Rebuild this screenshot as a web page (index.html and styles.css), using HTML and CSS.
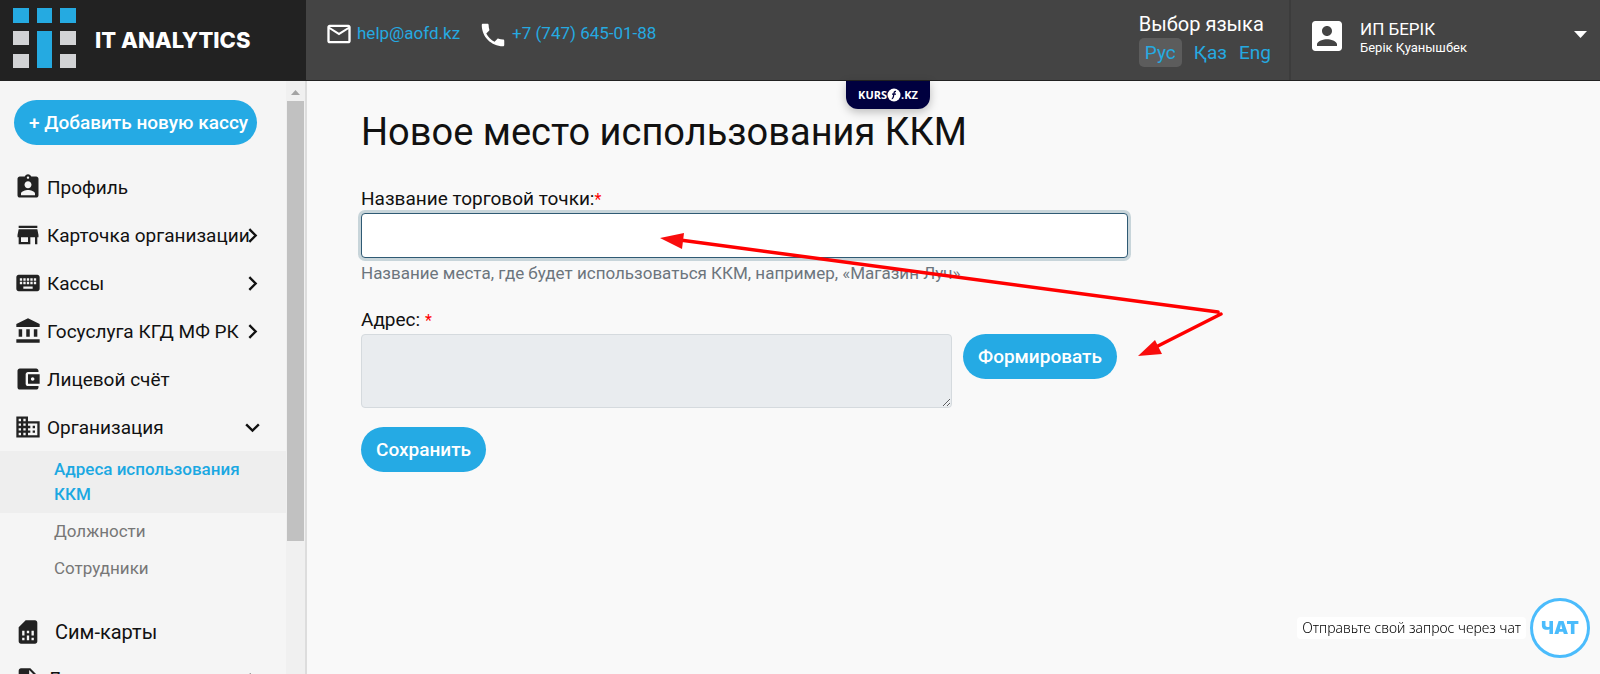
FILE: index.html
```html
<!DOCTYPE html>
<html lang="ru">
<head>
<meta charset="utf-8">
<title>Новое место использования ККМ</title>
<link rel="stylesheet" href="styles.css">
</head>
<body>
<header class="topbar">
  <a class="brand" href="#">
    <svg class="brand-logo" width="64" height="62" viewBox="0 0 64 62" aria-hidden="true">
      <g fill="#25aae1"><path d="M0 0h16v15H0zM24 0h15v15H24zM47 0h16v15H47zM24 23h15v37H24z"/></g>
      <g fill="#d2d3d5"><path d="M0 23h16v14H0zM47 23h16v14H47zM0 46h16v14H0zM47 46h16v14H47z"/></g>
    </svg>
    <span class="brand-name">IT ANALYTICS</span>
  </a>
  <div class="contacts">
    <a class="contact" href="#">
      <svg width="28" height="28" viewBox="0 0 24 24" fill="#fff"><path d="M22 6c0-1.100-.9-2-2-2H4c-1.100 0-2 .9-2 2v12c0 1.100.9 2 2 2h16c1.100 0 2-.9 2-2V6zm-2 0l-8 5-8-5h16zm0 12H4V8l8 5 8-5v10z"/></svg>
      <span>help@aofd.kz</span>
    </a>
    <a class="contact" href="#">
      <svg width="30" height="30" viewBox="0 0 24 24" fill="#fff"><path d="M20 15.500c-1.250 0-2.450-.2-3.570-.57-.35-.11-.74-.03-1.020.24l-2.200 2.200c-2.830-1.440-5.150-3.750-6.590-6.590l2.200-2.210c.28-.26.360-.65.250-1C8.700 6.450 8.500 5.250 8.500 4c0-.55-.45-1-1-1H4c-.55 0-1 .45-1 1 0 9.390 7.610 17 17 17 .55 0 1-.45 1-1v-3.500c0-.55-.45-1-1-1z"/></svg>
      <span>+7 (747) 645-01-88</span>
    </a>
  </div>
  <div class="language">
    <span class="language-title">Выбор языка</span>
    <nav class="language-list">
      <a class="lang lang-active" href="#">Рус</a><a class="lang" href="#">Қаз</a><a class="lang" href="#">Eng</a>
    </nav>
  </div>
  <button class="user" type="button">
    <svg width="40" height="40" viewBox="0 0 24 24" fill="#fff"><path d="M3 5v14c0 1.100.89 2 2 2h14c1.100 0 2-.9 2-2V5c0-1.100-.9-2-2-2H5c-1.110 0-2 .9-2 2zm12 4c0 1.660-1.340 3-3 3s-3-1.340-3-3 1.340-3 3-3 3 1.340 3 3zm-9 8c0-2 4-3.100 6-3.100s6 1.100 6 3.100v1H6v-1z"/></svg>
    <span class="user-text"><span class="user-name">ИП БЕРІК</span><span class="user-person">Берік Қуанышбек</span></span>
    <svg class="user-caret" width="14" height="8" viewBox="0 0 14 8" fill="#fff"><path d="M0 0h13L6.500 7z"/></svg>
  </button>
  <a class="kurs" href="#">KURS<svg width="14" height="14" viewBox="0 0 14 14"><circle cx="7" cy="7" r="6.500" fill="#fff"/><path d="M9 3.500C7 3.200 7 5 6.700 7S6 10.800 4.800 10.500M5 6.200h4" fill="none" stroke="#00003f" stroke-width="1.300"/></svg>.KZ</a>
</header>

<div class="layout">
  <aside class="sidebar">
    <div class="sidebar-content">
      <button class="btn add" type="button">+ Добавить новую кассу</button>
      <nav class="menu">
        <a class="item" href="#">
          <svg class="icon" viewBox="0 0 24 24"><path d="M19 3h-4.180C14.400 1.840 13.300 1 12 1c-1.300 0-2.400.84-2.820 2H5c-1.100 0-2 .9-2 2v14c0 1.100.9 2 2 2h14c1.100 0 2-.9 2-2V5c0-1.100-.9-2-2-2zm-7 0c.55 0 1 .45 1 1s-.45 1-1 1-1-.45-1-1 .45-1 1-1zm0 4c1.660 0 3 1.340 3 3s-1.340 3-3 3-3-1.340-3-3 1.340-3 3-3zm6 12H6v-1.400c0-2 4-3.100 6-3.100s6 1.100 6 3.100V19z"/></svg>
          <span>Профиль</span>
        </a>
        <a class="item" href="#">
          <svg class="icon" viewBox="0 0 24 24"><path d="M20 4H4v2h16V4zm1 10v-2l-1-5H4l-1 5v2h1v6h10v-6h4v6h2v-6h1zm-9 4H6v-4h6v4z"/></svg>
          <span>Карточка организации</span>
          <svg class="chevron" viewBox="0 0 24 24"><path d="M8 4l8 8-8 8"/></svg>
        </a>
        <a class="item" href="#">
          <svg class="icon" viewBox="0 0 24 24"><path d="M20 5H4c-1.100 0-1.990.9-1.990 2L2 17c0 1.100.9 2 2 2h16c1.100 0 2-.9 2-2V7c0-1.100-.9-2-2-2zm-9 3h2v2h-2V8zm0 3h2v2h-2v-2zM8 8h2v2H8V8zm0 3h2v2H8v-2zm-1 2H5v-2h2v2zm0-3H5V8h2v2zm9 7H8v-2h8v2zm0-4h-2v-2h2v2zm0-3h-2V8h2v2zm3 3h-2v-2h2v2zm0-3h-2V8h2v2z"/></svg>
          <span>Кассы</span>
          <svg class="chevron" viewBox="0 0 24 24"><path d="M8 4l8 8-8 8"/></svg>
        </a>
        <a class="item" href="#">
          <svg class="icon" viewBox="0 0 24 24"><path d="M4 10.500v6.500h3v-6.500H4zm6.500 0v6.500h3v-6.500h-3zM2 22h20v-3H2v3zm15-11.500v6.500h3v-6.500h-3zM12 1L2 6v2.500h20V6L12 1z"/></svg>
          <span>Госуслуга КГД МФ РК</span>
          <svg class="chevron" viewBox="0 0 24 24"><path d="M8 4l8 8-8 8"/></svg>
        </a>
        <a class="item" href="#">
          <svg class="icon" viewBox="0 0 24 24"><path d="M21 18v1c0 1.100-.9 2-2 2H5c-1.110 0-2-.9-2-2V5c0-1.100.89-2 2-2h14c1.100 0 2 .9 2 2v1h-9c-1.110 0-2 .9-2 2v8c0 1.100.89 2 2 2h9zm-9-2h10V8H12v8zm4-2.500c-.83 0-1.500-.67-1.500-1.500s.67-1.500 1.500-1.500 1.500.67 1.500 1.500-.67 1.500-1.500 1.500z"/></svg>
          <span>Лицевой счёт</span>
        </a>
        <a class="item" href="#">
          <svg class="icon" viewBox="0 0 24 24"><path d="M12 7V3H2v18h20V7H12zM6 19H4v-2h2v2zm0-4H4v-2h2v2zm0-4H4V9h2v2zm0-4H4V5h2v2zm4 12H8v-2h2v2zm0-4H8v-2h2v2zm0-4H8V9h2v2zm0-4H8V5h2v2zm10 12h-8v-2h2v-2h-2v-2h2v-2h-2V9h8v10zm-2-8h-2v2h2v-2zm0 4h-2v2h2v-2z"/></svg>
          <span>Организация</span>
          <svg class="chevron" viewBox="0 0 24 24"><path d="M4 8l8 8 8-8"/></svg>
        </a>
        <div class="submenu">
          <a class="sub sub-active" href="#">Адреса использования ККМ</a>
          <a class="sub" href="#">Должности</a>
          <a class="sub" href="#">Сотрудники</a>
        </div>
        <a class="item item-sim" href="#">
          <svg class="icon" viewBox="0 0 24 24"><path d="M19.990 4c0-1.100-.89-2-1.990-2h-8L4 8v12c0 1.100.9 2 2 2h12.010c1.100 0 1.990-.9 1.990-2l-.01-16zM9 19H7v-2h2v2zm8 0h-2v-2h2v2zm-8-4H7v-4h2v4zm4 4h-2v-4h2v4zm0-6h-2v-2h2v2zm4 2h-2v-4h2v4z"/></svg>
          <span>Сим-карты</span>
        </a>
        <a class="item item-docs" href="#">
          <svg class="icon" viewBox="0 0 24 24"><path d="M14 2H6c-1.100 0-1.990.9-1.990 2L4 20c0 1.100.89 2 1.990 2H18c1.100 0 2-.9 2-2V8l-6-6zm2 16H8v-2h8v2zm0-4H8v-2h8v2zm-3-5V3.500L18.500 9H13z"/></svg>
          <span>Документы</span>
          <svg class="chevron" viewBox="0 0 24 24"><path d="M8 4l8 8-8 8"/></svg>
        </a>
      </nav>
    </div>
    <div class="scrollbar" aria-hidden="true">
      <svg width="9" height="5" viewBox="0 0 9 5" fill="#a3a3a3"><path d="M0 5h9L4.500 0z"/></svg>
      <div class="thumb"></div>
    </div>
  </aside>

  <main class="main">
    <h1 class="title">Новое место использования ККМ</h1>
    <form class="form">
      <label class="label" for="place">Название торговой точки:<span class="req">*</span></label>
      <input class="control text" id="place" type="text">
      <p class="hint">Название места, где будет использоваться ККМ, например, «Магазин Луч»</p>
      <label class="label" for="address">Адрес: <span class="req">*</span></label>
      <div class="address-row">
        <textarea class="control area" id="address" readonly></textarea>
        <button class="btn" type="button">Формировать</button>
      </div>
      <button class="btn save" type="submit">Сохранить</button>
    </form>
    <svg class="arrows" width="570" height="130" viewBox="0 0 570 130" aria-hidden="true">
      <g stroke="#f00" stroke-width="3.500" stroke-linecap="round"><path d="M20 10L558 82M561 84L490 120"/></g>
      <path fill="#f90d0d" d="M0 8L24 3L22 19zM478 126L495 110L502 124z"/>
    </svg>
  </main>
</div>

<div class="chat">
  <span class="chat-text">Отправьте свой запрос через чат</span>
  <button class="chat-button" type="button">ЧАТ</button>
</div>
</body>
</html>
```

FILE: styles.css
```css
* { box-sizing: border-box; }

body {
  margin: 0;
  height: 100vh;
  display: flex;
  flex-direction: column;
  overflow: hidden;
  background: #f9f9f9;
  color: #111;
  font-family: Roboto, "Noto Sans", sans-serif;
  font-size: 17px;
}

a { text-decoration: none; color: inherit; }
button { font-family: inherit; border: 0; cursor: pointer; }
svg { flex: none; }

.topbar {
  position: relative;
  flex: none;
  display: flex;
  height: 81px;
  background: #444;
  border-bottom: 1px solid #222;
}

.brand {
  width: 306px;
  padding: 8px 13px;
  display: flex;
  gap: 18px;
  background: #222;
  color: #fff;
}
.brand-name {
  padding-top: 18px;
  font: 800 22px/28px Inter, sans-serif;
}

.contacts {
  flex: 1;
  display: flex;
  align-items: flex-start;
  gap: 18px;
  padding: 20px 19px;
  color: #25aae1;
}
.contact { display: flex; gap: 4px; line-height: 27px; }

.language { padding: 12px 12px 0 0; border-right: 2px solid #3c3c3c; }
.language-title { display: block; color: #fff; font-size: 20px; line-height: 24px; }
.language-list { display: flex; margin-top: 2px; }
.lang { padding: 0 6px; color: #25aae1; font-size: 19px; line-height: 29px; border-radius: 5px; }
.lang-active { margin-right: 6px; background: #5c5c5c; }

.user {
  width: 309px;
  display: flex;
  align-items: flex-start;
  padding: 16px 12px 0 16px;
  background: none;
  color: #fff;
  text-align: left;
}
.user-text { flex: 1; margin-left: 13px; padding-top: 3px; }
.user-name, .user-person { display: block; }
.user-name { font-size: 17px; line-height: 20px; }
.user-person { font-size: 13px; line-height: 18px; }
.user-caret { margin-top: 15px; }

.kurs {
  position: absolute;
  z-index: 2;
  top: 81px;
  left: 846px;
  width: 84px;
  height: 28px;
  display: flex;
  align-items: center;
  justify-content: center;
  background: #00003f;
  color: #fff;
  border-radius: 0 0 12px 12px;
  box-shadow: 0 3px 10px rgba(0, 0, 0, .25);
  font: 700 11px/28px "Open Sans", sans-serif;
}

.layout { flex: 1; min-height: 0; display: flex; }

.sidebar {
  width: 307px;
  flex: none;
  display: flex;
  overflow: hidden;
  background: #f5f5f5;
  border-right: 2px solid #ddd;
}
.sidebar-content { flex: 1; padding-top: 19px; }

.scrollbar {
  width: 19px;
  display: flex;
  flex-direction: column;
  align-items: center;
  gap: 6px;
  padding-top: 9px;
  background: #f0f0f0;
}
.thumb { width: 17px; height: 440px; background: #c1c1c1; }

.btn {
  height: 45px;
  padding: 0 15px;
  border-radius: 23px;
  background: #25aae4;
  color: #fff;
  font-size: 19px;
  font-weight: 500;
  white-space: nowrap;
}
.add { display: block; width: 243px; margin-left: 14px; }

.menu { margin-top: 18px; }
.item {
  position: relative;
  height: 48px;
  display: flex;
  align-items: center;
  gap: 5px;
  padding-left: 14px;
  font-size: 19px;
  white-space: nowrap;
}
.icon { width: 28px; height: 28px; fill: #222; }
.chevron {
  position: absolute;
  right: 24px;
  width: 19px;
  height: 19px;
  fill: none;
  stroke: #111;
  stroke-width: 3;
}

.submenu { margin-bottom: 21px; }
.sub {
  display: block;
  padding: 6px 32px 6px 54px;
  color: #777;
  font-size: 17px;
  line-height: 25px;
}
.sub-active { background: #eee; color: #1ba8e2; font-weight: 500; }
.item-sim { gap: 13px; font-size: 20px; }
.item-docs { font-size: 20px; }

.main { position: relative; flex: 1; padding: 25px 54px; }
.title { margin: 0; font-size: 38px; font-weight: 400; line-height: 52px; }
.form { max-width: 767px; margin-top: 27px; }
.label { display: block; font-size: 19px; line-height: 27px; }
.req { color: #f00; font-size: 16px; }

.control { display: block; border: 1px solid #d5dade; border-radius: 4px; font: inherit; }
.text {
  width: 100%;
  height: 45px;
  padding: 0 12px;
  background: #fff;
  border-color: #2f5a74;
  box-shadow: 0 0 0 3px #c8d5da;
  outline: 0;
}
.hint { margin: 3px 0 21px; color: #6c757d; font-size: 17px; line-height: 24px; }

.address-row { display: flex; align-items: flex-start; gap: 11px; }
.area { flex: 0 1 591px; height: 74px; background: #e9ecef; }
.save { display: block; margin-top: 19px; }

.arrows { position: absolute; left: 353px; top: 149px; pointer-events: none; }

.chat {
  position: fixed;
  right: 10px;
  bottom: 16px;
  display: flex;
  align-items: center;
  gap: 4px;
}
.chat-text {
  padding: 0 5px;
  background: #fff;
  border-radius: 4px;
  color: #000;
  font: 300 14px/22px "Noto Sans", sans-serif;
}
.chat-button {
  width: 60px;
  height: 60px;
  padding: 0;
  border: 3px solid #4bbcfc;
  border-radius: 50%;
  background: #fff;
  color: #4bbcfc;
  font: 900 18px/22px Inter, sans-serif;
}
```
